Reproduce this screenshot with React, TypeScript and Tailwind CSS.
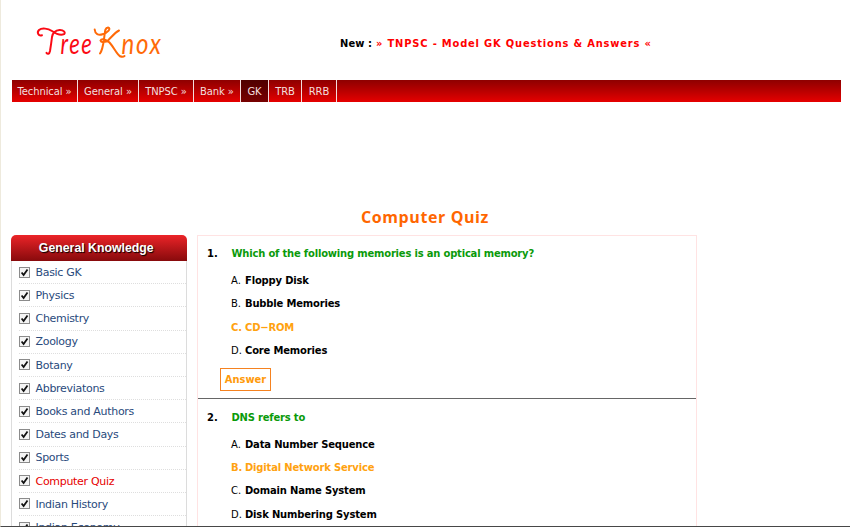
import React from "react";

const nav = [
  { label: "Technical »", w: "w-[66px]" },
  { label: "General »", w: "w-[61px]" },
  { label: "TNPSC »", w: "w-[55px]" },
  { label: "Bank »", w: "w-[47px]" },
  { label: "GK", w: "w-[28px]", active: true },
  { label: "TRB", w: "w-[33px]" },
  { label: "RRB", w: "w-[35px]" },
];

const topics = [
  "Basic GK", "Physics", "Chemistry", "Zoology", "Botany", "Abbreviatons",
  "Books and Authors", "Dates and Days", "Sports", "Computer Quiz",
  "Indian History", "Indian Economy",
];

const questions = [
  {
    n: "1.",
    text: "Which of the following memories is an optical memory?",
    options: ["Floppy Disk", "Bubble Memories", "CD−ROM", "Core Memories"],
    correct: 2,
  },
  {
    n: "2.",
    text: "DNS refers to",
    options: ["Data Number Sequence", "Digital Network Service", "Domain Name System", "Disk Numbering System"],
    correct: 1,
  },
];

function Logo() {
  return (
    <svg width="140" height="44" viewBox="34 23 140 44" className="block overflow-visible" role="img" aria-label="TreeKnox">
      <g fontFamily="'Lato', sans-serif" fontSize="28" fontStyle="italic" letterSpacing="2">
        <text x="60.500" y="54" fill="#fb0a14" textLength="33" lengthAdjust="spacingAndGlyphs">ree</text>
        <text x="121.500" y="54" fill="#ff6a08" textLength="41" lengthAdjust="spacingAndGlyphs">nox</text>
      </g>
      <g fill="none" strokeWidth="2" strokeLinecap="round" strokeLinejoin="round">
        <path stroke="#fb0a14" d="M42 35.200C38.500 36.500 36.500 32.500 39 30C42 27.500 48 28.500 52 31C57 34.500 61 35.500 64 34.200C66 32.500 63.500 29.800 59.500 30C54.500 30.300 52.800 33 52 37C51.300 43 50.500 48 50 51C49.300 54.500 47.500 54.200 46.500 52.800" />
        <path stroke="#ff6a08" d="M94.700 29.500C95 34 98.500 35.500 102.500 34.200C108 32.500 111.500 28.500 108 27.500C104.500 27.500 105 33 104 39C103.200 45 102.500 50 100 53.500M119 30.500C115 32.500 112 36.500 108.500 40C105.500 42.500 101 43 100.500 40.500C101.500 38 106.500 39.500 109.500 42.500C114 47.500 116.500 54 120 56.300Q123 57.500 124.500 56" />
      </g>
    </svg>
  );
}

function Check() {
  return (
    <svg width="11" height="11" viewBox="0 0 11 11" className="block shrink-0">
      <rect x=".5" y=".5" width="10" height="10" fill="#f4f4f4" stroke="#8b8b8b" />
      <path d="M2.600 5.500L4.600 8L8.500 2.500" fill="none" stroke="#111" strokeWidth="1.800" />
    </svg>
  );
}

function Question({ q }: { q: (typeof questions)[number] }) {
  return (
    <section className="pl-[9px]">
      <div className="flex h-[23px] items-center font-['DejaVu_Sans_Condensed','DejaVu_Sans',sans-serif] text-[11.1px] font-bold">
        <span className="w-[24.5px]">{q.n}</span>
        <h2 className="tracking-[-0.19px] text-[#0a9a0a]">{q.text}</h2>
      </div>
      <ol className="pt-[4px] pl-[24px]">
        {q.options.map((o, i) => (
          <li
            key={o}
            className={
              "flex h-[23.2px] items-center gap-[3px] font-['DejaVu_Sans_Condensed','DejaVu_Sans',sans-serif] text-[11.1px] " +
              (i === q.correct ? "font-bold text-[#ffa210]" : "text-black")
            }
          >
            <span className="w-[11px]">{"ABCD"[i]}.</span>
            <b className="tracking-[-0.17px]">{o}</b>
          </li>
        ))}
      </ol>
    </section>
  );
}

export default function App() {
  return (
    <div className="h-[527px] w-[850px] overflow-hidden border-b border-b-[#484848] border-l border-l-[#eeeadd] bg-white font-['Verdana','DejaVu_Sans',sans-serif] whitespace-nowrap">
      <header className="flex h-[80px] pt-[23px] pl-[33px]">
        <Logo />
        <p className="ml-[166px] flex h-[43px] items-center font-['DejaVu_Sans_Condensed','DejaVu_Sans',sans-serif] text-[11px] font-bold">
          <span className="mr-[4px] tracking-[0.1px]">New :</span>
          <span className="tracking-[0.83px] text-[#f00]">» TNPSC - Model GK Questions &amp; Answers «</span>
        </p>
      </header>
      <nav className="ml-[11px] flex h-[22px] w-[829px] bg-linear-to-b from-[#8e0000] to-[#e60000]">
        {nav.map((item) => (
          <a
            key={item.label}
            className={
              "flex items-center justify-center border-r border-[#f3dede] text-[10px] tracking-[-0.1px] text-[#f3dede] " +
              item.w + (item.active ? " bg-linear-to-b from-[#500000] to-[#780000]" : "")
            }
          >
            {item.label}
          </a>
        ))}
      </nav>
      <h1 className="mt-[103px] ml-[360px] h-[25px] text-[16px] leading-[25px] tracking-[0.6px] text-[#ff6600] font-bold font-['Trebuchet_MS','Open_Sans',sans-serif]">
        Computer Quiz
      </h1>
      <div className="mt-[5px] flex h-[292px] pl-[10px]">
        <aside className="w-[175.5px]">
          <h2 className="flex h-[26px] items-center justify-center rounded-t-[5px] bg-linear-to-b from-[#ec2428] to-[#880a0c] pr-[5px] font-['Liberation_Sans',Arial,sans-serif] text-[12.3px] font-bold text-white [text-shadow:1px_1px_1px_#000]">
            General Knowledge
          </h2>
          <ul className="border-x border-[#dcdcdc] pl-[7px]">
            {topics.map((t) => (
              <li
                key={t}
                className={
                  "flex h-[23.2px] items-center gap-[5.5px] border-b border-dotted border-[#dedede] text-[11px] tracking-[-0.3px] " +
                  (t === "Computer Quiz" ? "text-[#e60000]" : "text-[#294a7c]")
                }
              >
                <Check />
                <span className="pt-[2px]">{t}</span>
              </li>
            ))}
          </ul>
        </aside>
        <main className="ml-[10.5px] w-[500px] border border-[#ffe3e3] pt-[7px]">
          <Question q={questions[0]} />
          <div className="flex h-[36px] items-start border-b border-b-[#666] pt-[5px] pl-[22px]">
            <button className="h-[23px] w-[51px] border border-solid border-[#f58220] font-['DejaVu_Sans_Condensed','DejaVu_Sans',sans-serif] text-[11px] leading-[21px] font-bold text-[#ff9a0a]">
              Answer
            </button>
          </div>
          <div className="pt-[8px]">
            <Question q={questions[1]} />
          </div>
        </main>
      </div>
    </div>
  );
}
